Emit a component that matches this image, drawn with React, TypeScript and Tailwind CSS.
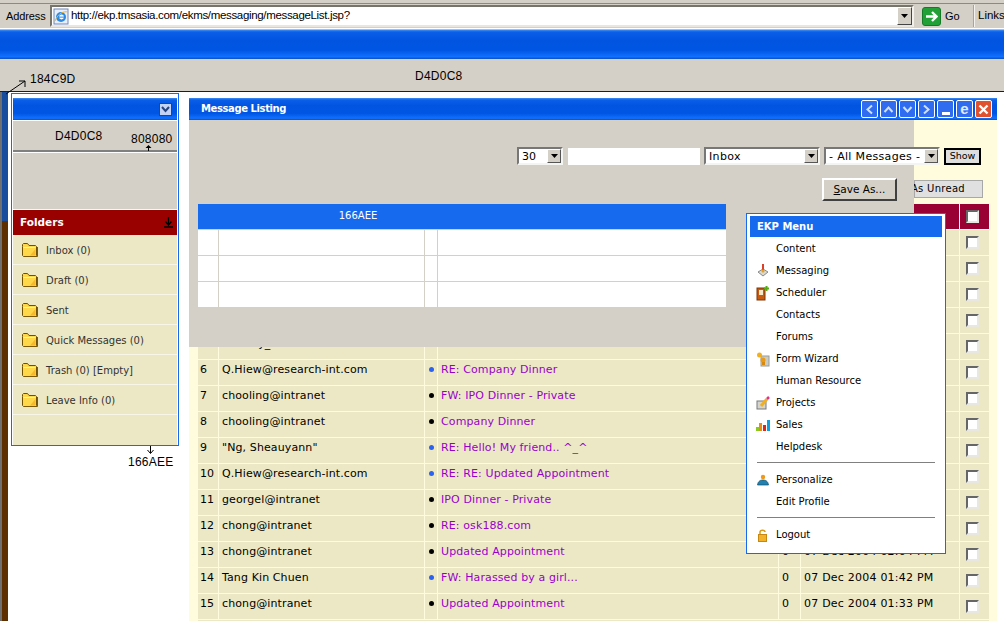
import React from "react";

const ui = "font-['DejaVu_Sans',Verdana,sans-serif]";
const arial = "font-['Liberation_Sans',Arial,sans-serif]";
const barBg =
  "bg-[linear-gradient(to_bottom,#3f8cf5_0,#0a5ee8_2px,#0054e0_35%,#0056e3_70%,#1170ff_92%,#0b4fc4_100%)]";

function FolderIcon() {
  return (
    <svg width="16" height="14" viewBox="0 0 16 14" className="shrink-0">
      <path d="M0.5 3.5V1.5L1.5 0.5H5.5L7 2.5H13.5L14.5 3.5V12.5L13.5 13.5H1.5L0.5 12.5Z" fill="#ffd84a" stroke="#6e5200" />
      <path d="M1.5 4.5H13.5" stroke="#fff2a8" />
      <path d="M8 12.5L13.5 6V12.5Z" fill="#f6b92a" />
      <path d="M15.5 4V13.5H2" stroke="#7b5a00" fill="none" />
    </svg>
  );
}

function Checkbox() {
  return (
    <div className="w-[13px] h-[13px] bg-white border-2 border-t-[#666666] border-l-[#666666] border-r-[#e8e8e0] border-b-[#e8e8e0] mt-[6px] ml-[6px]" />
  );
}

function Select({ label, w, tw }: { label: string; w: string; tw: string }) {
  return (
    <div className={`${w} h-[18px] shrink-0 flex items-center bg-white border-2 border-t-[#777777] border-l-[#777777] border-r-[#f4f4f0] border-b-[#f4f4f0]`}>
      <span className={`flex-1 text-[11px] leading-none text-black whitespace-nowrap overflow-hidden ${tw}`}>{label}</span>
      <div className="w-[14px] h-[14px] shrink-0 bg-[#d4d0c8] border border-t-white border-l-white border-r-[#555555] border-b-[#555555] flex items-center justify-center">
        <svg width="7" height="4" viewBox="0 0 7 4"><path d="M0 0H7L3.5 4Z" fill="#000" /></svg>
      </div>
    </div>
  );
}

function TitleBtn({ children, red }: { children: React.ReactNode; red?: boolean }) {
  return (
    <div className={`w-[17px] h-[18px] rounded-[2px] border border-white flex items-center justify-center ${red ? "bg-[#e0512e]" : "bg-[#2f6cf0]"}`}>
      {children}
    </div>
  );
}

const glyph = { fill: "none", stroke: "#cfe0ff", strokeWidth: 2 };

const rows: [string, string, string, boolean, string, string][] = [
  ["1", "", "", false, "", ""],
  ["2", "", "", false, "", ""],
  ["3", "", "", false, "", ""],
  ["4", "", "", false, "", ""],
  ["5", "chantry_", "", false, "", ""],
  ["6", "Q.Hiew@research-int.com", "RE: Company Dinner", true, "", ""],
  ["7", "chooling@intranet", "FW: IPO Dinner - Private", false, "", ""],
  ["8", "chooling@intranet", "Company Dinner", false, "", ""],
  ["9", "\"Ng, Sheauyann\"", "RE: Hello! My friend.. ^_^", true, "", ""],
  ["10", "Q.Hiew@research-int.com", "RE: RE: Updated Appointment", true, "", ""],
  ["11", "georgel@intranet", "IPO Dinner - Private", false, "", ""],
  ["12", "chong@intranet", "RE: osk188.com", false, "", ""],
  ["13", "chong@intranet", "Updated Appointment", false, "0", "07 Dec 2004 02:04 PM"],
  ["14", "Tang Kin Chuen", "FW: Harassed by a girl...", true, "0", "07 Dec 2004 01:42 PM"],
  ["15", "chong@intranet", "Updated Appointment", false, "0", "07 Dec 2004 01:33 PM"],
];

const folders = ["Inbox (0)", "Draft (0)", "Sent", "Quick Messages (0)", "Trash (0) [Empty]", "Leave Info (0)"];

function MenuItem({ label, icon }: { label: string; icon?: React.ReactNode }) {
  return (
    <div className="h-[22px] flex items-center">
      <div className="w-[26px] flex justify-center shrink-0">{icon}</div>
      <span className="text-[10px] text-black leading-none">{label}</span>
    </div>
  );
}

export default function App() {
  return (
    <div className={`relative w-[1004px] h-[621px] overflow-hidden bg-white flex flex-col ${ui}`}>
      {/* browser toolbar remnant */}
      <div className="h-[4px] shrink-0 bg-[#d4d0c8] border-b border-[#8a8a84]" />
      {/* address bar */}
      <div className={`h-[25px] shrink-0 bg-[#d4d0c8] flex items-center border-b border-white ${arial}`}>
        <span className="w-[50px] shrink-0 pl-[6px] text-[11px] text-black leading-none tracking-[-0.1px]">Address</span>
        <div className="w-[864px] shrink-0 h-[22px] bg-white border-2 border-t-[#77746c] border-l-[#77746c] border-r-[#f2f0ea] border-b-[#e8e6df] flex items-center">
          <svg width="17" height="17" viewBox="0 0 17 17" className="ml-[1px] shrink-0">
            <rect x="1" y="1" width="14" height="15" fill="#e8eefc" stroke="#6f88b8" />
            <circle cx="8" cy="9" r="5" fill="#2d8ae0" />
            <circle cx="8.5" cy="9" r="2.4" fill="#ffffff" />
            <rect x="6" y="8.6" width="6" height="1" fill="#2d8ae0" />
            <path d="M2 13C5 5 11 3 15 4" stroke="#e8b23a" fill="none" />
          </svg>
          <span className="ml-[1px] flex-1 text-[11.5px] leading-none text-black tracking-[-0.33px] whitespace-nowrap">http://ekp.tmsasia.com/ekms/messaging/messageList.jsp?</span>
          <div className="w-[15px] h-[18px] shrink-0 bg-[#d4d0c8] border border-t-white border-l-white border-r-[#444444] border-b-[#444444] flex items-center justify-center">
            <svg width="7" height="4" viewBox="0 0 7 4"><path d="M0 0H7L3.5 4Z" fill="#000" /></svg>
          </div>
        </div>
        <div className="ml-[8px] w-[19px] h-[19px] shrink-0 rounded-[3px] bg-[#21a038] border border-[#157a28] flex items-center justify-center">
          <svg width="13" height="13" viewBox="0 0 13 13"><path d="M1 6.5H11M7 2L11.5 6.5L7 11" stroke="#fff" strokeWidth="2.4" fill="none" /></svg>
        </div>
        <span className="ml-[4px] w-[14px] shrink-0 text-[11px] leading-none text-black">Go</span>
        <div className="ml-[14px] w-[2px] h-[22px] shrink-0 bg-[#f4f2ec] border-l border-[#a8a49c]" />
        <span className="ml-[3px] text-[11.5px] leading-none text-black whitespace-nowrap">Links</span>
      </div>
      {/* blue band */}
      <div className={`h-[30px] shrink-0 border-t border-[#9ec0f0] ${barBg}`} />
      {/* gray band */}
      <div className="relative h-[33px] shrink-0 bg-[#d4d0c8] border-b border-[#0a1a5a]">
        <span className={`absolute left-[30px] top-[14px] text-[12px] leading-none text-black ${arial} tracking-[0.02em]`}>184C9D</span>
        <span className={`absolute left-[415px] top-[11px] text-[12px] leading-none text-black ${arial} tracking-[0.02em]`}>D4D0C8</span>
        <svg width="22" height="18" viewBox="0 0 22 18" className="absolute left-[5px] top-[20px]">
          <path d="M1 15L20 2M14 2H20V8" stroke="#000" fill="none" />
        </svg>
      </div>
      {/* body */}
      <div className="flex-1 flex min-h-0">
        {/* strip */}
        <div className="w-[8px] shrink-0 flex">
          <div className="w-[2px] bg-[#6f6f6f]" />
          <div className="w-[6px] flex flex-col">
            <div className="h-[129px] bg-[#184c9d]" />
            <div className="flex-1 bg-[#5c2e00]" />
          </div>
        </div>
        {/* sidebar */}
        <div className="relative w-[168px] h-[353px] ml-[3px] mt-[1px] shrink-0 border border-[#166aee] bg-white px-[1px] pt-[4px] flex flex-col">
          <div className={`h-[22px] shrink-0 flex items-center justify-end pr-[5px] ${barBg}`}>
            <div className="w-[13px] h-[13px] bg-[#c3d2f5] border border-[#26447e] flex items-center justify-center">
              <svg width="9" height="7" viewBox="0 0 9 7"><path d="M1 1L4.5 5L8 1" stroke="#26447e" strokeWidth="2" fill="none" /></svg>
            </div>
          </div>
          <div className="relative h-[32px] shrink-0 bg-[#d4d0c8] border-t border-white border-b-2 border-b-[#808080]">
            <span className={`absolute left-[42px] top-[9px] text-[12px] leading-none text-black ${arial} tracking-[0.02em]`}>D4D0C8</span>
            <span className={`absolute left-[118px] top-[12px] text-[12px] leading-none text-black ${arial} tracking-[0.02em]`}>808080</span>
            <svg width="7" height="6" viewBox="0 0 7 6" className="absolute left-[132px] top-[24px]"><path d="M3.5 0L6.5 3H4V6H3V3H0.5Z" fill="#000" /></svg>
          </div>
          <div className="h-[58px] shrink-0 bg-[#d4d0c8] border-t border-white border-b border-b-white" />
          <div className="h-[25px] shrink-0 bg-[#990000] flex items-center justify-between pl-[7px] pr-[4px]">
            <span className="text-[10.5px] font-bold text-white leading-none">Folders</span>
            <svg width="9" height="11" viewBox="0 0 9 11"><path d="M4.5 0V7M1.5 4.5L4.5 8L7.5 4.5M0 10H9" stroke="#000" strokeWidth="1.3" fill="none" /></svg>
          </div>
          {folders.map((f) => (
            <div key={f} className="h-[30px] shrink-0 bg-[#ece8c5] border-b border-b-[#f8f6e6] flex items-center pl-[9px]">
              <FolderIcon />
              <span className="ml-[8px] pt-[2px] text-[10px] text-[#333333] leading-none whitespace-nowrap">{f}</span>
            </div>
          ))}
          <div className="flex-1 bg-[#ece8c5]" />
          <div className="absolute left-[135px] top-[352px]">
            <svg width="7" height="8" viewBox="0 0 7 8"><path d="M3.5 0V7M0.5 4L3.5 7.5L6.5 4" stroke="#000" fill="none" /></svg>
          </div>
          <span className={`absolute left-[116px] top-[362px] text-[12px] leading-none text-black ${arial} tracking-[0.02em]`}>166AEE</span>
        </div>
        {/* main */}
        <div className="relative w-[808px] ml-[10px] mt-[6px] shrink-0 flex flex-col">
          <div className={`h-[22px] shrink-0 flex items-center justify-between pl-[12px] pr-[5px] ${barBg}`}>
            <span className="text-[10px] font-bold text-white leading-none tracking-[-0.4px]">Message Listing</span>
            <div className="flex gap-[2px]">
              <TitleBtn><svg width="9" height="11" viewBox="0 0 9 11"><path d="M7 1.5L2.5 5.5L7 9.5" {...glyph} /></svg></TitleBtn>
              <TitleBtn><svg width="11" height="9" viewBox="0 0 11 9"><path d="M1.5 7L5.5 2.5L9.5 7" {...glyph} /></svg></TitleBtn>
              <TitleBtn><svg width="11" height="9" viewBox="0 0 11 9"><path d="M1.5 2L5.5 6.5L9.5 2" {...glyph} /></svg></TitleBtn>
              <TitleBtn><svg width="9" height="11" viewBox="0 0 9 11"><path d="M2 1.5L6.5 5.5L2 9.5" {...glyph} /></svg></TitleBtn>
              <TitleBtn><div className="w-[8px] h-[3px] bg-white mt-[8px]" /></TitleBtn>
              <TitleBtn><span className={`text-[15px] font-bold text-[#dfe9ff] leading-none ${arial} -mt-[2px]`}>e</span></TitleBtn>
              <TitleBtn red><svg width="11" height="11" viewBox="0 0 11 11"><path d="M1.5 1.5L9.5 9.5M9.5 1.5L1.5 9.5" stroke="#fff" strokeWidth="2.4" /></svg></TitleBtn>
            </div>
          </div>
          {/* cream content */}
          <div className="relative flex-1 bg-[#fffbdd] min-h-0 overflow-hidden">
            <div className="h-[84px] flex flex-col items-end">
              <div className="relative z-20 mt-[27px] mr-[16px] flex items-center gap-[4px]">
                <Select label="30" w="w-[46px] mr-[1px]" tw="pl-[3px]" />
                <div className="w-[132px] h-[17px] shrink-0 bg-white" />
                <Select label="Inbox" w="w-[116px]" tw="pl-[3px] tracking-[0.03em]" />
                <Select label="- All Messages -" w="w-[116px]" tw="pl-[3px] tracking-[0.03em]" />
                <div className="w-[37px] h-[17px] shrink-0 bg-[#dedede] border-2 border-black flex items-center justify-center text-[9.5px] text-black leading-none">Show</div>
              </div>
              <div className="mt-[15px] mr-[14px] h-[18px] w-[69px] bg-[#e0e0e0] border border-[#a8a8a8] flex items-center justify-end pr-[17px] text-[10px] text-black leading-none tracking-[0.03em] whitespace-nowrap">
                As Unread
              </div>
            </div>
            <div className="ml-[9px] w-[791px] grid grid-cols-[20px_205px_12px_340px_21px_158px_29px] auto-rows-[25px] gap-[1px] bg-[#fffbdd]">
              <div className="col-span-6 bg-[#990033]" />
              <div className="bg-[#990033]"><Checkbox /></div>
              {rows.map((r) => (
                <React.Fragment key={r[0]}>
                  <div className="bg-[#ece8c5] pl-[2px] text-[11px] leading-[20px] text-black">{r[0]}</div>
                  <div className="bg-[#ece8c5] pl-[3px] text-[11px] leading-[20px] text-black tracking-[0.01em] whitespace-nowrap">{r[1]}</div>
                  <div className="bg-[#ece8c5] flex justify-center pt-[7px]">
                    {r[2] && <div className={`w-[5px] h-[5px] rounded-full ${r[3] ? "bg-[#2b62f0]" : "bg-black"}`} />}
                  </div>
                  <div className="bg-[#ece8c5] pl-[3px] text-[11px] leading-[20px] text-[#9900cc] whitespace-nowrap tracking-[0.01em]">{r[2]}</div>
                  <div className="bg-[#ece8c5] pl-[3px] text-[11px] leading-[20px] text-black">{r[4]}</div>
                  <div className="bg-[#ece8c5] pl-[3px] text-[11px] leading-[20px] text-black whitespace-nowrap tracking-[0.02em]">{r[5]}</div>
                  <div className="bg-[#ece8c5]"><Checkbox /></div>
                </React.Fragment>
              ))}
              <div className="col-span-7 bg-[#ece8c5]" />
            </div>
            {/* gray overlay */}
            <div className="absolute z-10 left-0 top-0 w-[725px] h-[227px] bg-[#d4d0c8] flex flex-col">
              <div className="h-[58px] flex justify-end pr-[17px]">
                <div className="mt-[58px] w-[75px] h-[23px] shrink-0 bg-[#d4d0c8] border-2 border-t-white border-l-white border-r-[#404040] border-b-[#404040] flex items-center justify-center text-[10.5px] text-black leading-none">
                  <span><span className="underline">S</span>ave As...</span>
                </div>
              </div>
              <div className="mt-[26px] ml-[9px] w-[528px] grid grid-cols-[20px_205px_12px_1fr] auto-rows-[25px] gap-[1px] bg-[#d4d0c8]">
                <div className="col-span-4 bg-[#166aee] flex items-center justify-center pr-[208px] pb-[2px] text-[10px] text-white leading-none">166AEE</div>
                {[0, 1, 2].map((i) => (
                  <React.Fragment key={i}>
                    <div className="bg-white" />
                    <div className="bg-white" />
                    <div className="bg-white" />
                    <div className="bg-white" />
                  </React.Fragment>
                ))}
              </div>
            </div>
          </div>
        </div>
      </div>
      {/* EKP menu */}
      <div className="absolute z-30 left-[746px] top-[213px] w-[200px] h-[341px] bg-white border border-[#166aee] px-[3px] pt-[2px] flex flex-col">
        <div className="h-[21px] shrink-0 bg-[#166aee] flex items-center pl-[7px] text-[10px] font-bold text-white leading-none">EKP Menu</div>
        <div className="pt-[1px]">
          <MenuItem label="Content" />
          <MenuItem label="Messaging" icon={
            <svg width="15" height="16" viewBox="0 0 15 16"><path d="M2 9L7 6L12 9L7 13Z" fill="#d8d8d4" stroke="#8a8a8a" /><path d="M7 1V8" stroke="#d8402a" strokeWidth="2" /><circle cx="7" cy="8" r="1.5" fill="#e8a020" /></svg>
          } />
          <MenuItem label="Scheduler" icon={
            <svg width="14" height="17" viewBox="0 0 14 17"><rect x="1" y="3" width="8" height="12" fill="#c85a10" stroke="#7a3608" /><rect x="3" y="5" width="4" height="5" fill="#f4e8c8" /><path d="M10.5 1V6M8 3.5H13" stroke="#58a818" strokeWidth="2" /></svg>
          } />
          <MenuItem label="Contacts" />
          <MenuItem label="Forums" />
          <MenuItem label="Form Wizard" icon={
            <svg width="14" height="15" viewBox="0 0 14 15"><rect x="5" y="4" width="8" height="10" fill="#c8ccc4" stroke="#9a9a94" /><circle cx="3.5" cy="3" r="2.5" fill="#f0b020" /><circle cx="7" cy="8" r="2.5" fill="#e89a18" /><rect x="6" y="10" width="3" height="3" fill="#d88a10" /></svg>
          } />
          <MenuItem label="Human Resource" />
          <MenuItem label="Projects" icon={
            <svg width="15" height="14" viewBox="0 0 15 14"><rect x="1" y="5" width="9" height="8" fill="#d4d4d0" stroke="#7a7a7a" /><path d="M5 10L11 3" stroke="#f0b020" strokeWidth="3" /><path d="M11 3L13 1" stroke="#e0308a" strokeWidth="2.5" /></svg>
          } />
          <MenuItem label="Sales" icon={
            <svg width="15" height="12" viewBox="0 0 15 12"><rect x="0" y="8" width="3" height="4" fill="#8cc820" /><rect x="3" y="4" width="3" height="8" fill="#f08a10" /><rect x="7" y="6" width="3" height="6" fill="#e02818" /><rect x="11" y="1" width="3" height="11" fill="#10a0e0" /></svg>
          } />
          <MenuItem label="Helpdesk" />
        </div>
        <div className="h-[1px] shrink-0 bg-[#808080] mx-[7px] mt-[4px] mb-[6px]" />
        <MenuItem label="Personalize" icon={
          <svg width="12" height="13" viewBox="0 0 12 13"><circle cx="6" cy="3" r="2.2" fill="#f09818" /><path d="M0.5 11C1 7 3.5 6 6 6S11 7 11.5 11Z" fill="#2080b0" stroke="#105070" strokeWidth="0.7" /></svg>
        } />
        <MenuItem label="Edit Profile" />
        <div className="h-[1px] shrink-0 bg-[#808080] mx-[7px] mt-[4px] mb-[6px]" />
        <MenuItem label="Logout" icon={
          <svg width="10" height="13" viewBox="0 0 10 13"><path d="M2 6V3C2 0.5 7 0.5 7 3" stroke="#d89a18" strokeWidth="1.5" fill="none" /><rect x="0.5" y="5.5" width="8" height="7" fill="#f2b22a" stroke="#c8880f" /></svg>
        } />
      </div>
    </div>
  );
}
